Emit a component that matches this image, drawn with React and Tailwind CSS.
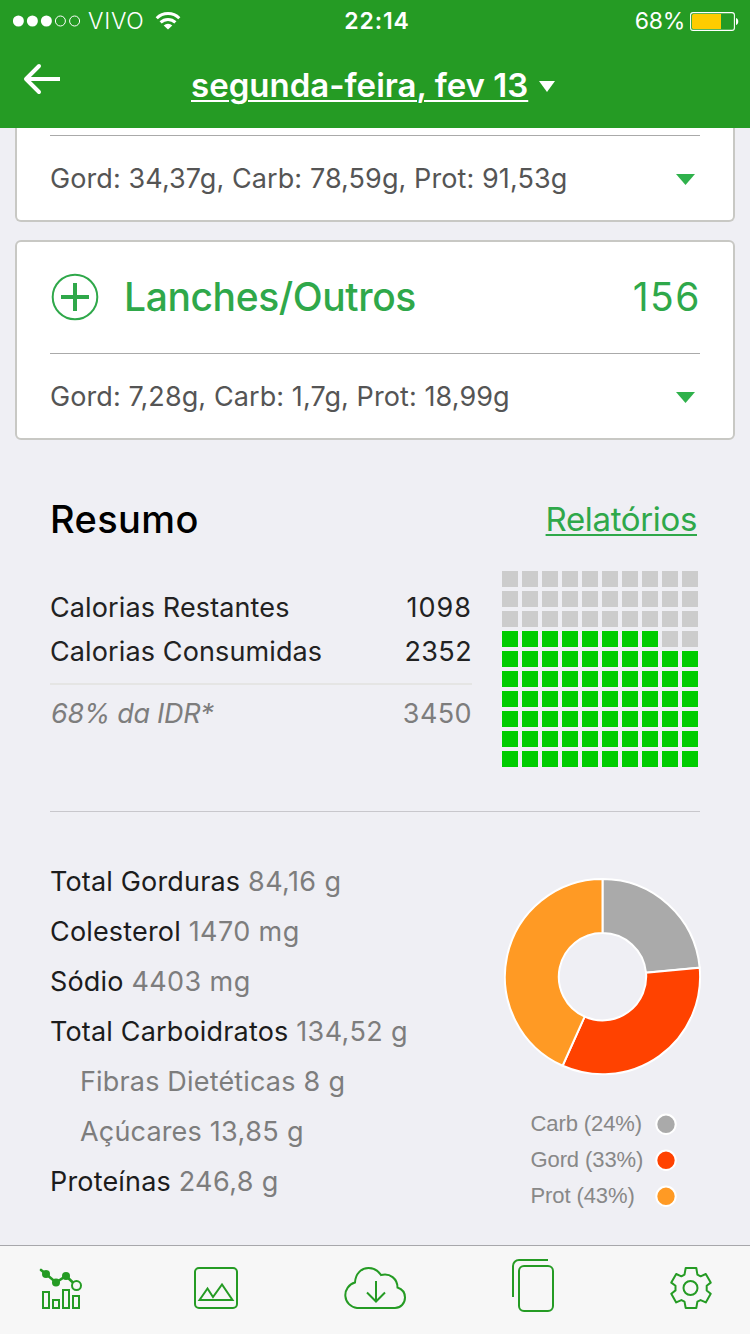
const GREEN = "#259b24";

function Caret({ className }) {
  return (
    <svg viewBox="0 0 20 12" preserveAspectRatio="none" className={className}>
      <path d="M0 0h20L10 12z" fill="currentColor" />
    </svg>
  );
}

function StatusBar() {
  return (
    <div className="grid h-10 grid-cols-3 items-center pr-[11px] pl-[13px] text-[23px] leading-10">
      <div className="flex items-center">
        <svg viewBox="0 0 68 12" className="h-3 w-[68px]" fill="#fff">
          <circle cx="5.4" cy="6" r="5.5" />
          <circle cx="19.4" cy="6" r="5.5" />
          <circle cx="33.4" cy="6" r="5.5" />
          <circle cx="47.4" cy="6" r="5" fill="none" stroke="#fff" />
          <circle cx="61.6" cy="6" r="5" fill="none" stroke="#fff" />
        </svg>
        <span className="ml-[7px] font-light tracking-[0.7px]">VIVO</span>
        <svg viewBox="0 0 26 19" className="ml-[11px] h-[19px] w-[26px] -translate-y-px" fill="none" stroke="#fff" strokeWidth="3">
          <path d="M1.7 7.2a16 16 0 0 1 22.6 0" />
          <path d="M5.6 11.4a10.6 10.6 0 0 1 14.8 0" />
          <path d="M13 18.6L8.7 14.4a6.2 6.2 0 0 1 8.6 0z" fill="#fff" stroke="none" />
        </svg>
      </div>
      <div className="pl-0.5 text-center font-semibold tracking-[0.9px]">22:14</div>
      <div className="flex items-center justify-end">
        <span className="tracking-[-0.3px]">68%</span>
        <svg viewBox="0 0 49 19" className="ml-[5px] h-[19px] w-[49px]">
          <rect x="0.6" y="0.6" width="43.8" height="17.8" rx="2.5" fill="none" stroke="#fff" strokeWidth="1.1" />
          <path d="M3.5 2H31v15H3.500a1.500 1.500 0 0 1-1.500-1.500v-12A1.500 1.500 0 0 1 3.500 2z" fill="#ffcc00" />
          <path d="M46 6c3 .6 3 6.400 0 7z" fill="#fff" />
        </svg>
      </div>
    </div>
  );
}

function Header() {
  return (
    <header className="h-32 shrink-0 bg-[#259b24] pt-px text-white">
      <StatusBar />
      <div className="flex h-[87px] items-start">
        <svg viewBox="0 0 38 32" className="mt-[22px] ml-[23px] h-8 w-[38px]" fill="none" stroke="#fff" strokeWidth="4" strokeLinecap="round" strokeLinejoin="round">
          <path d="M16 3L3 16l13 13" />
          <path d="M3 16h34" strokeLinecap="butt" />
        </svg>
        <h1 className="mt-6 ml-[130px] text-[33px] leading-10 font-semibold whitespace-nowrap underline decoration-2 underline-offset-[3px]">
          segunda-feira, fev 13
        </h1>
        <Caret className="mt-10 ml-[11px] h-[11px] w-4" />
      </div>
    </header>
  );
}

function MacroRow({ text }) {
  return (
    <div className="flex h-[84px] items-center justify-between pr-[5px] text-[27px] tracking-[0.09px] text-[#555]">
      <span className="mt-0.5">{text}</span>
      <Caret className="mt-0.5 h-[11px] w-[19px] text-[#2fb14b]" />
    </div>
  );
}

function Line({ label, value, sub }) {
  return (
    <li className={sub ? "ml-[30px] tracking-[0.17px] text-[#7d7d7d]" : "tracking-[0.17px] text-[#1c1c1c]"}>
      {label} <span className="tracking-[0.4px] text-[#7d7d7d]">{value}</span>
    </li>
  );
}

const NUTRIENTS = [
  ["Total Gorduras", "84,16 g"],
  ["Colesterol", "1470 mg"],
  ["Sódio", "4403 mg"],
  ["Total Carboidratos", "134,52 g"],
  ["Fibras Dietéticas", "8 g", true],
  ["Açúcares", "13,85 g", true],
  ["Proteínas", "246,8 g"],
];

const SHARES = [
  { label: "Carb (24%)", color: "#aaaaaa", from: 0, to: 0.2353 },
  { label: "Gord (33%)", color: "#ff4200", from: 0.2353, to: 0.567 },
  { label: "Prot (43%)", color: "#ff9a24", from: 0.567, to: 1 },
];

function point(r, t) {
  const a = t * Math.PI * 2;
  return `${(98.5 + r * Math.sin(a)).toFixed(2)} ${(98.7 - r * Math.cos(a)).toFixed(2)}`;
}

function Donut() {
  return (
    <svg viewBox="0 0 198 198" className="size-[198px]">
      {SHARES.map((s) => (
        <path
          key={s.label}
          d={`M${point(97.6, s.from)}A97.6 97.6 0 0 1 ${point(97.6, s.to)}L${point(43.7, s.to)}A43.7 43.7 0 0 0 ${point(43.7, s.from)}Z`}
          fill={s.color}
          stroke="#fff"
          strokeWidth="2"
        />
      ))}
    </svg>
  );
}

function TabBar() {
  return (
    <nav className="flex h-[89px] shrink-0 items-start border-t border-[#a7a7ab] bg-[#f7f7f7] pt-2.5 pl-[38px]">
      <svg viewBox="0 0 46 54" className="h-[54px] w-[46px]" fill="none" stroke={GREEN} strokeWidth="2">
        <path d="M3 14L8 18l10 8.500L28 20l8 7.500" strokeWidth="2.600" strokeLinecap="round" />
        <circle cx="8" cy="18" r="4" fill={GREEN} stroke="none" />
        <circle cx="18" cy="26.500" r="4" fill={GREEN} stroke="none" />
        <circle cx="28" cy="20" r="4" fill={GREEN} stroke="none" />
        <circle cx="38.500" cy="29.600" r="4.500" fill="#f7f7f7" />
        <path d="M5 36h6v16H5zM15 44h6v8h-6zM25 34h6v18h-6zM35 40h6v12h-6z" />
      </svg>
      <svg viewBox="0 0 44 54" className="ml-[110px] h-[54px] w-11" fill="none" stroke={GREEN} strokeWidth="2">
        <rect x="1" y="12" width="42" height="40" rx="4" />
        <path d="M5.500 44L13.500 32.500l5.500 8.500L28 28.500 38.500 44z" />
      </svg>
      <svg viewBox="0 0 62 54" className="ml-[106px] h-[54px] w-[62px]" fill="none" stroke={GREEN} strokeWidth="2">
        <path d="M13 52A13 13 0 0 1 11 26.500C11.500 17.500 17.500 12 24.500 12c5.500 0 9.500 2.500 12.500 7 9-2.500 16.500 4 16.500 12.500C58 33 61 37 61 41.500 61 47.500 56.500 52 51 52z" />
        <path d="M32 25v20.500M23 36.500l9 9 9-9" />
      </svg>
      <svg viewBox="0 0 44 58" className="ml-[106px] h-[58px] w-11" fill="none" stroke={GREEN} strokeWidth="2">
        <rect x="7" y="10" width="34" height="45" rx="5" />
        <path d="M1 41V10a6 6 0 0 1 6-6h29" />
      </svg>
      <svg viewBox="0 0 42 54" className="ml-[114px] h-[54px] w-[42px]" fill="none" stroke={GREEN} strokeWidth="2" strokeLinejoin="round">
        <path d="M15.700 12h10.600l1.100 6.600 3.200 1.700 5.200-2.300 4.900 8.600-4 3.200v4.600l4 3.300-4.900 8.700-5.200-2.300-3.200 1.500-1.100 6.400H15.700l-1.200-6.400-3.100-1.500-5.200 2.300-4.900-8.700 4.200-3.300v-4.600l-4.200-3.200 4.900-8.600 5.200 2.300 3.100-1.700z" />
        <circle cx="20.500" cy="32" r="7" />
      </svg>
    </nav>
  );
}

export default function App() {
  return (
    <div className="flex h-[1334px] w-[750px] flex-col overflow-hidden bg-[#efeff4] font-[Inter,'Noto_Sans',sans-serif]">
      <Header />
      <main className="flex-1">
        <section className="mx-[15px] h-[94px] rounded-b-md border-2 border-t-0 border-[#c8c8c4] bg-white px-[33px] pt-[7px]">
          <div className="h-px bg-[#aaa]" />
          <MacroRow text="Gord: 34,37g, Carb: 78,59g, Prot: 91,53g" />
        </section>

        <section className="mx-[15px] mt-[18px] h-[200px] rounded-md border-2 border-[#c8c8c4] bg-white px-[33px]">
          <div className="flex h-[111px] items-center text-[39px] text-[#2fa84a]">
            <svg viewBox="0 0 48 48" className="mb-0.5 ml-px size-12" fill="none" stroke="currentColor">
              <circle cx="24" cy="24" r="22.300" strokeWidth="2" />
              <path d="M24 10v28M10 24h28" strokeWidth="4" />
            </svg>
            <h2 className="ml-[25px] font-medium tracking-[-0.4px]">Lanches/Outros</h2>
            <span className="-mr-px ml-auto tracking-[1.5px]">156</span>
          </div>
          <div className="h-px bg-[#aaa]" />
          <MacroRow text="Gord: 7,28g, Carb: 1,7g, Prot: 18,99g" />
        </section>

        <div className="mt-[49px] flex items-center justify-between pr-[53px] pl-[50px] leading-[60px]">
          <h2 className="text-[38px] font-medium tracking-[0.4px] text-black">Resumo</h2>
          <a className="text-[33px] tracking-[-0.35px] text-[#2fa84a] underline decoration-2 underline-offset-[3px]">Relatórios</a>
        </div>

        <div className="mt-[22px] ml-[50px] flex h-[241px] w-[650px] justify-between border-b border-[#c8c7cc] pr-0.5">
          <div className="w-[422px] pt-[15px] text-[27px] leading-[44px] tracking-[0.12px] text-[#222]">
            <div className="flex justify-between"><span>Calorias Restantes</span><span className="tracking-[1px]">1098</span></div>
            <div className="flex justify-between"><span>Calorias Consumidas</span><span className="tracking-[0.4px]">2352</span></div>
            <div className="mt-[9px] flex justify-between border-t-2 border-[#e5e5e4] pt-[7px] text-[#7d7d7d]">
              <em className="pl-px tracking-[-0.3px]">68% da IDR*</em><span className="tracking-[0.4px]">3450</span>
            </div>
          </div>
          <div className="grid h-[196px] grid-cols-10 gap-1">
            {Array.from({ length: 100 }, (_, i) => (
              <span key={i} className={i >= 30 && i !== 38 && i !== 39 ? "size-4 bg-[#00cc00]" : "size-4 bg-[#ccc]"} />
            ))}
          </div>
        </div>

        <div className="mt-[44px] ml-[50px] flex w-[652px] justify-between">
          <ul className="pt-px text-[27px] leading-[50px]">
            {NUTRIENTS.map(([label, value, sub]) => (
              <Line key={label} label={label} value={value} sub={sub} />
            ))}
          </ul>
          <div className="mt-[22px]">
            <Donut />
            <ul className="mt-[30px] ml-[26.5px] font-['Liberation_Sans',Arial,sans-serif] text-[22px] leading-9 tracking-[-0.1px] text-[#888]">
              {SHARES.map((s) => (
                <li key={s.label} className="flex w-[146px] items-center justify-between">
                  {s.label}
                  <svg viewBox="0 0 22 22" className="size-[22px]">
                    <circle cx="11" cy="11.3" r="9.7" fill={s.color} stroke="#fff" strokeWidth="2" />
                  </svg>
                </li>
              ))}
            </ul>
          </div>
        </div>
      </main>
      <TabBar />
    </div>
  );
}
